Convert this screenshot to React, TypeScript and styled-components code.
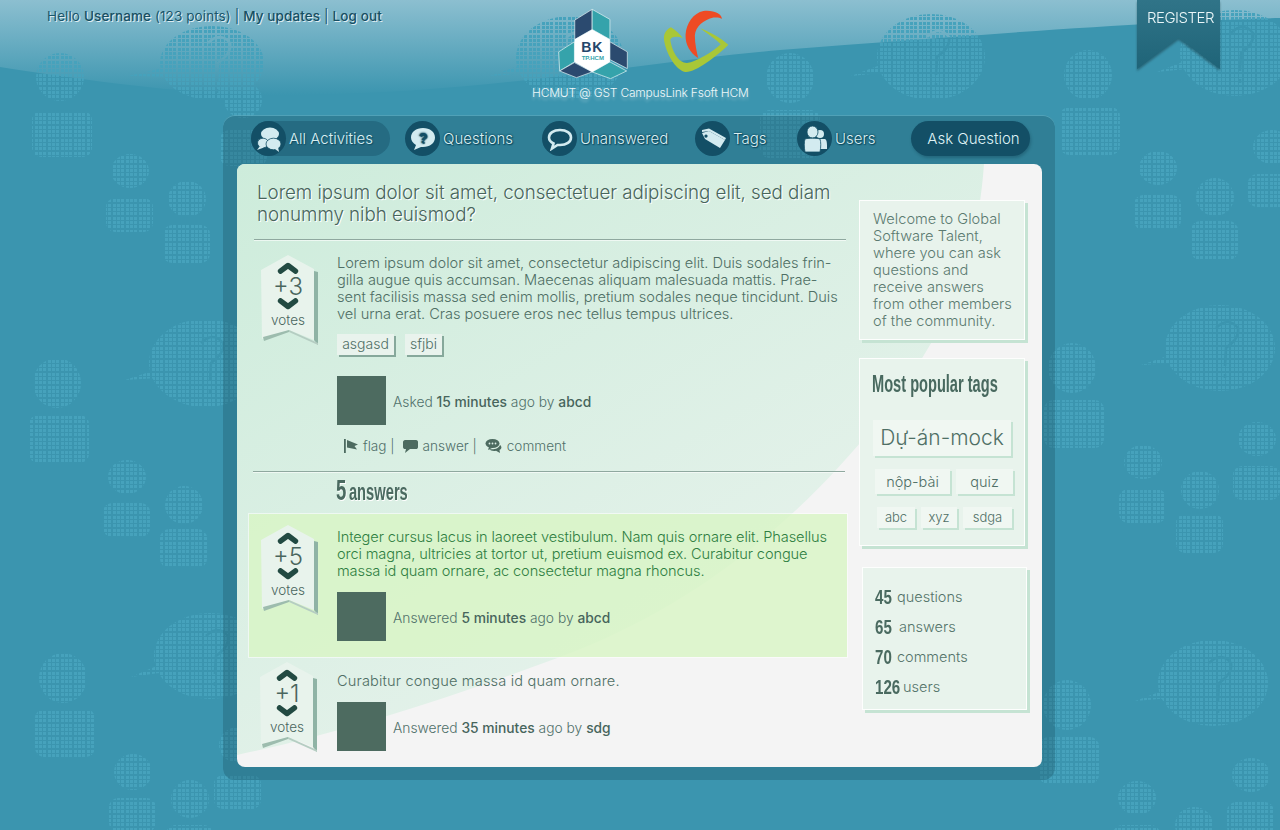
import React from "react";
import styled, { createGlobalStyle } from "styled-components";

const Global = createGlobalStyle`
  html, body { margin: 0; padding: 0; background: #3b95af; }
  body { font-family: Inter, "Noto Sans", "Liberation Sans", sans-serif; font-weight: 300; }
`;

const COND = `"Liberation Sans", Arial, sans-serif`;

const Page = styled.div`
  position: relative;
  width: 1280px;
  height: 830px;
  overflow: hidden;
  background: #3b95af;
`;
const Backdrop = styled.svg`
  position: absolute;
  left: 0;
  top: 0;
`;
const Header = styled.header`
  position: relative;
  display: grid;
  grid-template-columns: 1fr 216px 1fr;
  height: 115px;
`;
const UserLine = styled.div`
  padding: 6px 0 0 47px;
  font-size: 13.5px;
  line-height: 20px;
  letter-spacing: 0.1px;
  color: #1a566b;
  font-weight: 400;
  white-space: nowrap;
  text-shadow: 1px 1px 0 rgba(255, 255, 255, 0.75);
  b { font-weight: 500; color: #174f63; }
`;
const Brand = styled.div`
  display: flex;
  flex-direction: column;
  align-items: stretch;
`;
const LogoRow = styled.div`
  display: flex;
  align-items: flex-start;
  gap: 33px;
  padding: 8px 0 0 25px;
  height: 77px;
`;
const Caption = styled.div`
  font-size: 12px;
  line-height: 16px;
  text-align: center;
  color: #eef8fa;
  white-space: nowrap;
  letter-spacing: -0.2px;
  text-shadow: 0 3px 3px rgba(255, 255, 255, 0.35);
`;
const RibbonSlot = styled.div`
  display: flex;
  justify-content: flex-end;
  padding-right: 60px;
`;
const RibbonShadow = styled.div`
  height: 72px;
  filter: drop-shadow(0 2px 1px rgba(20, 50, 60, 0.45));
`;
const Ribbon = styled.a`
  display: block;
  box-sizing: border-box;
  width: 83px;
  height: 69px;
  padding: 8px 0 0 4px;
  text-align: center;
  font-size: 15px;
  font-weight: 300;
  line-height: 20px;
  letter-spacing: -0.5px;
  color: #eaf6f8;
  background: linear-gradient(#307488, #1f6478);
  clip-path: polygon(0 0, 100% 0, 100% 100%, 50% 55%, 0 100%);
`;

const Panel = styled.main`
  position: relative;
  box-sizing: border-box;
  width: 832px;
  height: 665px;
  margin-left: 223px;
  padding: 6px 13px 13px 14px;
  background: rgba(25, 80, 100, 0.32);
  border-radius: 12px;
  box-shadow: inset 0 1px 0 rgba(120, 205, 225, 0.45);
`;
const Nav = styled.nav`
  display: grid;
  grid-template-columns: 154px 137px 153px 102px 114px 119px;
  height: 35px;
  padding-left: 14px;
  margin-bottom: 8px;
`;
const NavLink = styled.a<{ $pill?: boolean }>`
  display: flex;
  align-items: center;
  gap: 3px;
  height: 35px;
  width: ${(p) => (p.$pill ? "139px" : "auto")};
  border-radius: 18px;
  background: ${(p) => (p.$pill ? "#256b82" : "transparent")};
  font-size: 15px;
  color: #d9eff3;
  font-weight: 300;
  white-space: nowrap;
  text-shadow: ${(p) =>
    p.$pill ? "1px 1px 1px #0f4a5f" : "0 0 2px #0f4a5f, 0 0 2px #0f4a5f, 1px 1px 1px #0f4a5f"};
`;
const NavIcon = styled.span`
  display: flex;
  align-items: center;
  justify-content: center;
  flex: none;
  width: 35px;
  height: 35px;
  border-radius: 50%;
  background: #134f66;
`;
const AskButton = styled.a`
  display: flex;
  align-items: center;
  justify-content: center;
  height: 35px;
  width: 119px;
  box-sizing: border-box;
  padding-left: 6px;
  border-radius: 18px;
  background: #134f66;
  color: #dff2f5;
  font-size: 15px;
  white-space: nowrap;
  box-shadow: 1px 2px 3px rgba(10, 50, 65, 0.3);
`;

const Card = styled.div`
  position: relative;
  display: grid;
  grid-template-columns: 613px 1fr;
  column-gap: 9px;
  height: 603px;
  border-radius: 8px;
  overflow: hidden;
  background: #f4f4f4;
  color: #4a6a60;
`;
const Swoosh = styled.svg`
  position: absolute;
  left: 0;
  top: 0;
`;
const Content = styled.section`
  position: relative;
  padding: 18px 0 0 0;
`;
const Title = styled.h1`
  margin: 0 0 0 20px;
  font-size: 18.8px;
  line-height: 22px;
  font-weight: 300;
  color: #48655c;
  letter-spacing: -0.05px;
  white-space: nowrap;
  text-shadow: 1px 1px 0 #fff;
`;
const Rule = styled.hr<{ $left: number; $top: number }>`
  height: 1px;
  width: 592px;
  border: 0;
  margin: ${(p) => p.$top}px 0 0 ${(p) => p.$left}px;
  background: #8fa89f;
  box-shadow: 0 1px 0 rgba(255, 255, 255, 0.6);
`;
const Post = styled.article<{ $top: number; $badge: number; $col: number }>`
  display: grid;
  grid-template-columns: ${(p) => p.$col}px 1fr;
  padding-left: ${(p) => p.$badge}px;
  padding-top: ${(p) => p.$top}px;
`;
const Body = styled.p<{ $tone?: string; $top?: number; $track?: number }>`
  margin: ${(p) => p.$top ?? 0}px 0 0;
  font-size: 14.6px;
  line-height: 17px;
  letter-spacing: ${(p) => p.$track ?? -0.04}px;
  white-space: nowrap;
  color: ${(p) => p.$tone || "#4f6f65"};
`;
const VoteBox = styled.div`
  position: relative;
  display: flex;
  flex-direction: column;
  align-items: center;
  box-sizing: border-box;
  width: 54px;
  height: 90px;
  padding-top: 7px;
`;
const VoteShape = styled.svg`
  position: absolute;
  left: 0;
  top: 0;
`;
const Chevron = styled.svg`
  position: relative;
  display: block;
`;
const VoteValue = styled.div`
  position: relative;
  padding-top: 1px;
  margin-bottom: -1px;
  font-size: 24px;
  line-height: 24px;
  color: #4a665e;
  font-weight: 300;
`;
const VoteLabel = styled.div`
  position: relative;
  margin-top: 3px;
  font-size: 13.5px;
  line-height: 15px;
  color: #4a665e;
  font-weight: 300;
`;
const TagRow = styled.div`
  display: flex;
  gap: 11px;
  margin-top: 11px;
`;
const PostTag = styled.a<{ $w: number }>`
  display: block;
  box-sizing: border-box;
  width: ${(p) => p.$w}px;
  height: 21px;
  text-align: center;
  font-size: 14px;
  line-height: 20px;
  background: #e9f3ed;
  color: #4f6f65;
  box-shadow: 2px 2px 0 #86a89b;
`;
const Author = styled.div<{ $top: number }>`
  display: flex;
  align-items: center;
  gap: 7px;
  margin-top: ${(p) => p.$top}px;
  font-size: 13.8px;
  color: #50706a;
  b { font-weight: 500; color: #47655c; }
`;
const Avatar = styled.div`
  flex: none;
  width: 49px;
  height: 49px;
  background: #4d6b60;
`;
const AuthorText = styled.span`
  padding-top: 3px;
`;
const Actions = styled.div`
  display: flex;
  align-items: center;
  gap: 5px;
  margin: 10px 0 0 7px;
  height: 22px;
  font-size: 13.6px;
  color: #50706a;
  span { margin-right: 3px; }
`;
const AnswersHead = styled.h2`
  margin: 0 0 0 99px;
  height: 42px;
  font-family: ${COND};
  font-weight: 700;
  font-size: 23px;
  line-height: 36px;
  color: #4a6a60;
  white-space: nowrap;
  transform: scaleX(0.64);
  transform-origin: left center;
  text-shadow: 1px 1px 0 #fff;
  b { font-size: 29px; font-weight: 700; margin-right: 4px; }
`;
const Accepted = styled.div`
  box-sizing: border-box;
  height: 143px;
  width: 598px;
  margin-left: 12px;
  background: rgba(216, 245, 196, 0.8);
  box-shadow: 0 0 0 1px rgba(255, 255, 255, 0.55);
`;
const Aside = styled.aside`
  position: relative;
  display: flex;
  flex-direction: column;
  align-items: flex-start;
  padding-top: 36px;
`;
const Box = styled.div<{ $h: number; $w?: number; $left?: number; $gap: number }>`
  box-sizing: border-box;
  width: ${(p) => p.$w ?? 166}px;
  height: ${(p) => p.$h}px;
  margin: 0 0 ${(p) => p.$gap}px ${(p) => p.$left ?? 0}px;
  background: #e8f3ec;
  border: 1px solid #fdfefd;
  box-shadow: 3px 3px 0 #c5e3d3;
`;
const Welcome = styled.p`
  margin: 0;
  padding: 10px 0 0 13px;
  font-size: 14.6px;
  line-height: 17px;
  white-space: nowrap;
  color: #5b7a70;
`;
const BoxTitle = styled.h3`
  margin: 0 0 0 12px;
  padding: 11px 0 0;
  height: 28px;
  font-family: ${COND};
  font-weight: 700;
  font-size: 23px;
  line-height: 28px;
  white-space: nowrap;
  color: #48695f;
  transform: scaleX(0.635);
  transform-origin: left center;
`;
const CloudRow = styled.div<{ $top: number; $left: number }>`
  display: flex;
  gap: 6px;
  margin: ${(p) => p.$top}px 0 0 ${(p) => p.$left}px;
`;
const CloudTag = styled.a<{ $w: number; $h: number; $size: number }>`
  display: block;
  flex: none;
  box-sizing: border-box;
  width: ${(p) => p.$w}px;
  height: ${(p) => p.$h}px;
  line-height: ${(p) => p.$h}px;
  font-size: ${(p) => p.$size}px;
  text-align: center;
  color: #4f6f65;
  background: #f0f7f2;
  box-shadow: 2px 2px 0 #c5e3d3;
`;
const Stats = styled.div`
  padding: 14px 0 0 12px;
`;
const Stat = styled.div`
  display: flex;
  height: 30px;
  line-height: 30px;
  font-size: 14.5px;
  color: #54736a;
  white-space: nowrap;
`;
const StatNum = styled.b<{ $w: number }>`
  flex: none;
  width: ${(p) => p.$w}px;
  font-family: ${COND};
  font-weight: 700;
  font-size: 21px;
  color: #4a6a60;
  transform: scaleX(0.72);
  transform-origin: left center;
`;

/* ---------- drawings ---------- */
type Person = [number, number, number, number, number, number, number, number];
const people: Person[] = [
  [60, 77, 24, 24, 32, 111, 60, 46],
  [130, 171, 19, 17, 106, 198, 47, 34],
  [187, 199, 19, 18, 163, 225, 47, 38],
  [57, 383, 24, 25, 29, 415, 60, 48],
  [127, 477, 19, 17, 103, 503, 47, 34],
  [184, 505, 19, 19, 160, 529, 47, 39],
  [63, 678, 24, 25, 35, 709, 60, 48],
  [133, 772, 19, 18, 109, 798, 47, 34],
  [190, 799, 19, 19, 166, 825, 47, 34],
  [1088, 75, 24, 25, 1060, 107, 60, 48],
  [1158, 168, 19, 17, 1134, 195, 47, 35],
  [1215, 197, 19, 19, 1191, 221, 47, 39],
  [1272, 147, 19, 17, 1248, 174, 47, 33],
  [1072, 368, 24, 25, 1044, 400, 60, 48],
  [1143, 462, 19, 17, 1119, 489, 47, 34],
  [1200, 490, 19, 19, 1176, 514, 47, 39],
  [1257, 439, 19, 17, 1233, 466, 47, 34],
  [1067, 705, 24, 25, 1039, 737, 60, 47],
  [1137, 798, 19, 17, 1113, 825, 47, 34],
  [1194, 825, 19, 18, 1170, 850, 47, 34],
  [1251, 775, 19, 17, 1227, 802, 47, 34],
  [243, 100, 19, 18, 220, 130, 47, 36],
  [790, 78, 24, 25, 760, 110, 60, 48],
  [238, 745, 19, 18, 214, 775, 47, 34],
];
const bubbles: [number, number, number, number, number, number][] = [
  [212, 63, 52, 37, 128, 76],
  [205, 363, 56, 44, 125, 380],
  [210, 656, 56, 43, 131, 677],
  [570, 58, 54, 42, 490, 76],
  [931, 57, 54, 43, 851, 76],
  [1235, 53, 55, 43, 1157, 72],
  [1220, 348, 55, 43, 1141, 365],
  [1213, 683, 55, 43, 1135, 701],
];
const DOT_STEPS = [0, 4, 9];

const BackdropArt = () => (
  <Backdrop width="1280" height="830" viewBox="0 0 1280 830">
    <defs>
      <linearGradient id="sheen" x1="0" y1="0" x2="0" y2="1">
        <stop offset="0" stopColor="#8cbfd0" />
        <stop offset="1" stopColor="#3b95af" />
      </linearGradient>
      <pattern id="dots" width="13" height="13" patternUnits="userSpaceOnUse">
        {DOT_STEPS.map((x) =>
          DOT_STEPS.map((y) => (
            <rect key={`${x}-${y}`} x={x} y={y} width="3" height="3" fill="#46a2bc" shapeRendering="crispEdges" />
          ))
        )}
      </pattern>
      <mask id="figures" maskUnits="userSpaceOnUse" x="0" y="0" width="1280" height="830">
        {people.map(([hx, hy, rx, ry, bx, by, bw, bh], i) => (
          <g key={i} fill="#fff">
            <ellipse cx={hx} cy={hy} rx={rx} ry={ry} />
            <rect x={bx} y={by} width={bw} height={bh} rx="9" />
          </g>
        ))}
        {bubbles.map(([cx, cy, rx, ry, tx, ty], i) => (
          <g key={i}>
            <ellipse cx={cx} cy={cy} rx={rx} ry={ry} fill="#fff" />
            <path d={`M${tx} ${ty} L${cx - 35} ${cy + 2} L${cx - 30} ${cy + 14} Z`} fill="#fff" />
            <path
              d={`M${cx - 4} ${cy - 20} Q${cx + 8} ${cy - 32} ${cx + 18} ${cy - 20} Q${cx + 20} ${cy - 10} ${cx + 6} ${cy} L${cx + 5} ${cy + 18} M${cx + 5} ${cy + 26} v4`}
              fill="none"
              stroke="#000"
              strokeWidth="2.6"
            />
          </g>
        ))}
      </mask>
    </defs>
    <path
      d="M0 0 H1280 V18 C1180 20 1010 32 780 50 C640 62 500 92 300 95 C200 96 110 84 0 67 Z"
      fill="url(#sheen)"
    />
    <rect width="1280" height="830" fill="url(#dots)" mask="url(#figures)" />
  </Backdrop>
);

const BkLogo = () => (
  <svg width="72" height="72" viewBox="170 24 215 215">
    <g stroke="#e9f6f7" strokeWidth="2" strokeLinejoin="round">
      <polygon points="223,60 275,28 275,88 223,118" fill="#2b4a6f" />
      <polygon points="275,28 328,58 328,118 275,88" fill="#35a3ab" />
      <polygon points="175,155 222,125 222,185 178,212" fill="#35a3ab" />
      <polygon points="178,212 222,187 275,215 228,232" fill="#2b4a6f" />
      <polygon points="328,125 380,155 380,205 328,178" fill="#2b4a6f" />
      <polygon points="275,215 328,185 378,212 330,235" fill="#35a3ab" />
    </g>
    <polygon points="275,88 328,118 328,185 275,215 222,185 222,118" fill="#fff" />
    <text x="275" y="156" textAnchor="middle" fontFamily="Liberation Sans, sans-serif" fontWeight="700" fontSize="42" letterSpacing="2" fill="#24456a">BK</text>
    <text x="277" y="180" textAnchor="middle" fontFamily="Liberation Sans, sans-serif" fontWeight="700" fontSize="18" fill="#35a3ab">TP.HCM</text>
  </svg>
);
const GLogo = () => (
  <svg width="68" height="67" viewBox="485 40 205 200">
    <path d="M512 97 C495 105 488 120 492 140 C498 175 525 225 555 232 C585 235 650 185 685 150 C665 130 630 112 600 100 C620 115 650 135 662 148 C640 170 590 200 560 205 C535 205 515 170 510 135 C512 125 530 122 548 130 C540 118 525 105 512 97 Z" fill="#a9c737" />
    <path d="M665 72 C668 58 640 44 610 48 C580 54 558 85 556 120 C555 150 570 175 594 190 C590 172 584 148 584 122 C586 95 612 74 640 68 C650 67 660 68 665 72 Z" fill="#ee4b24" />
  </svg>
);

const I = "#d3ebf0";
const ActivitiesIcon = () => (
  <svg width="28" height="28" viewBox="0 0 28 28" fill={I}>
    <ellipse cx="15" cy="9" rx="9" ry="6.5" />
    <path d="M9 12 L7 17 L13 14 Z" />
    <ellipse cx="8" cy="18" rx="5.5" ry="4.8" stroke="#134f66" strokeWidth="0.8" />
    <path d="M5 21 L2 25 L9 22.5 Z" />
    <ellipse cx="18.5" cy="19" rx="7.5" ry="5.8" stroke="#134f66" strokeWidth="0.8" />
    <path d="M20 24 L24 27 L23 22 Z" />
  </svg>
);
const QuestionIcon = () => (
  <svg width="26" height="24" viewBox="0 0 26 24">
    <path d="M13 1 C20 1 25 5 25 10.5 C25 16 20 20 13 20 L11 20 L4 23 L6 18 C3 16 1 14 1 10.5 C1 5 6 1 13 1 Z" fill={I} />
    <text x="13" y="16" textAnchor="middle" fontFamily="Liberation Sans, sans-serif" fontWeight="700" fontSize="14" fill="#134f66">?</text>
  </svg>
);
const BubbleIcon = () => (
  <svg width="26" height="24" viewBox="0 0 26 24" fill="none">
    <path d="M13 3 C19.5 3 24 6 24 10.5 C24 15 19.5 18 13 18 L10.5 18 L5 21.5 L6.5 16.5 C3.5 15 2 13 2 10.5 C2 6 6.5 3 13 3 Z" stroke={I} strokeWidth="2.6" />
  </svg>
);
const TagsIcon = () => (
  <svg width="28" height="24" viewBox="0 0 28 24" fill={I}>
    <path d="M10 5 L26 14 L21 22 L6 13 L3 7 Z M7 8.5 a1.6 1.6 0 1 0 0.01 0 Z" fillRule="evenodd" transform="translate(0 -1)" />
    <path d="M3 3 L10 1.5 L27 11 L26 13 L10 4 L3 5 Z" />
  </svg>
);
const UsersIcon = () => (
  <svg width="26" height="28" viewBox="0 0 26 28" fill={I}>
    <circle cx="18" cy="9" r="4" />
    <path d="M15 14 H23 C25 15 25 18 25 24 H16 Z" />
    <ellipse cx="10.5" cy="7" rx="5.5" ry="6" stroke="#134f66" strokeWidth="0.8" />
    <path d="M3 14 C5 13 16 13 18 14 C19 17 19 22 18 27 H3 C2 22 2 17 3 14 Z" stroke="#134f66" strokeWidth="0.8" />
  </svg>
);
const FlagIcon = () => (
  <svg width="14" height="14" viewBox="0 0 14 14" fill="#4d6b60">
    <rect x="0" y="0" width="1.8" height="14" />
    <path d="M3 1 L14 5.5 L10.5 7 L13 10.5 L3 8.5 Z" />
  </svg>
);
const AnswerIcon = () => (
  <svg width="15" height="13" viewBox="0 0 15 13" fill="#4d6b60">
    <path d="M2 0 H13 C14.5 0 15 1 15 2 V7 C15 8.5 14 9 13 9 H7 L2 13 L3 9 H2 C1 9 0 8.5 0 7 V2 C0 1 1 0 2 0 Z" />
  </svg>
);
const CommentIcon = () => (
  <svg width="17" height="14" viewBox="0 0 17 14" fill="#4d6b60">
    <ellipse cx="7.5" cy="4.5" rx="7" ry="4.5" />
    <path d="M4 8 L3 11 L8 8.5 Z" />
    <path d="M4 10 C9 11 14 9.5 15 6 C17 7.5 17 10 14.5 11 L15 14 L11 11.8 C8 12.5 5.5 11.5 4 10 Z" />
    <g fill="#dcefe5"><circle cx="4.5" cy="4.5" r="0.9" /><circle cx="7.5" cy="4.5" r="0.9" /><circle cx="10.5" cy="4.5" r="0.9" /></g>
  </svg>
);

const Chev = ({ up }: { up?: boolean }) => (
  <Chevron width="22" height="12" viewBox="0 0 22 12">
    <path
      d={up ? "M3.5 9.2 L11 3.5 L18.5 9.2" : "M3.5 2.8 L11 8.5 L18.5 2.8"}
      fill="none"
      stroke="#224a42"
      strokeWidth="5.4"
      strokeLinecap="round"
      strokeLinejoin="round"
    />
  </Chevron>
);

const Vote = ({ value }: { value: string }) => (
  <VoteBox>
    <VoteShape width="57" height="90" viewBox="0 0 57 90">
      <polygon points="27,0 53,14 53,85 28,75 1,84 0,15" fill="#e8f3ec" />
      <polygon points="53,16 57,17 57,90 53,85" fill="#8fb3a5" />
      <polygon points="2,82 28,75 28,77 3,86" fill="#9dbcae" />
      <polygon points="28,75 57,88 57,90 28,77" fill="#b5cdc2" />
    </VoteShape>
    <Chev up />
    <VoteValue>{value}</VoteValue>
    <Chev />
    <VoteLabel>votes</VoteLabel>
  </VoteBox>
);

export default function App() {
  return (
    <Page>
      <Global />
      <BackdropArt />
      <Header>
        <UserLine>
          Hello <b>Username</b> (123 points) | <b>My updates</b> | <b>Log out</b>
        </UserLine>
        <Brand>
          <LogoRow>
            <BkLogo />
            <GLogo />
          </LogoRow>
          <Caption>HCMUT @ GST CampusLink Fsoft HCM</Caption>
        </Brand>
        <RibbonSlot>
          <RibbonShadow>
            <Ribbon>REGISTER</Ribbon>
          </RibbonShadow>
        </RibbonSlot>
      </Header>
      <Panel>
        <Nav>
          <NavLink $pill><NavIcon><ActivitiesIcon /></NavIcon>All Activities</NavLink>
          <NavLink><NavIcon><QuestionIcon /></NavIcon>Questions</NavLink>
          <NavLink><NavIcon><BubbleIcon /></NavIcon>Unanswered</NavLink>
          <NavLink><NavIcon><TagsIcon /></NavIcon>Tags</NavLink>
          <NavLink><NavIcon><UsersIcon /></NavIcon>Users</NavLink>
          <AskButton>Ask Question</AskButton>
        </Nav>
        <Card>
          <Swoosh width="805" height="603" viewBox="0 0 805 603">
            <defs>
              <linearGradient id="mint" x1="0" y1="0" x2="0.75" y2="1">
                <stop offset="0" stopColor="#cdecdb" />
                <stop offset="1" stopColor="#eaf3ee" />
              </linearGradient>
            </defs>
            <path d="M0 0 L747 0 C742 70 725 130 690 186 C640 270 520 420 323 493 C210 535 100 570 0 591 Z" fill="url(#mint)" />
          </Swoosh>
          <Content>
            <Title>
              Lorem ipsum dolor sit amet, consectetuer adipiscing elit, sed diam<br />
              nonummy nibh euismod?
            </Title>
            <Rule $left={17} $top={13} />
            <Post $top={15} $badge={24} $col={76}>
              <Vote value="+3" />
              <div>
                <Body>
                  Lorem ipsum dolor sit amet, consectetur adipiscing elit. Duis sodales frin-<br />
                  gilla augue quis accumsan. Maecenas aliquam malesuada mattis. Prae-<br />
                  sent facilisis massa sed enim mollis, pretium sodales neque tincidunt. Duis<br />
                  vel urna erat. Cras posuere eros nec tellus tempus ultrices.
                </Body>
                <TagRow>
                  <PostTag $w={57}>asgasd</PostTag>
                  <PostTag $w={37}>sfjbi</PostTag>
                </TagRow>
                <Author $top={21}>
                  <Avatar />
                  <AuthorText>Asked <b>15 minutes</b> ago by <b>abcd</b></AuthorText>
                </Author>
                <Actions>
                  <FlagIcon /><span>flag |</span>
                  <AnswerIcon /><span>answer |</span>
                  <CommentIcon /><span>comment</span>
                </Actions>
              </div>
            </Post>
            <Rule $left={16} $top={14} />
            <AnswersHead><b>5</b>answers</AnswersHead>
            <Accepted>
              <Post $top={11} $badge={12} $col={76}>
                <Vote value="+5" />
                <div>
                  <Body $tone="#2f7f42" $top={4} $track={-0.12}>
                    Integer cursus lacus in laoreet vestibulum. Nam quis ornare elit. Phasellus<br />
                    orci magna, ultricies at tortor ut, pretium euismod ex. Curabitur congue<br />
                    massa id quam ornare, ac consectetur magna rhoncus.
                  </Body>
                  <Author $top={12}>
                    <Avatar />
                    <AuthorText>Answered <b>5 minutes</b> ago by <b>abcd</b></AuthorText>
                  </Author>
                </div>
              </Post>
            </Accepted>
            <Post $top={5} $badge={23} $col={77}>
              <Vote value="+1" />
              <div>
                <Body $top={11} $track={0.15}>Curabitur congue massa id quam ornare.</Body>
                <Author $top={12}>
                  <Avatar />
                  <AuthorText>Answered <b>35 minutes</b> ago by <b>sdg</b></AuthorText>
                </Author>
              </div>
            </Post>
          </Content>
          <Aside>
            <Box $h={140} $gap={18}>
              <Welcome>
                Welcome to Global<br />
                Software Talent,<br />
                where you can ask<br />
                questions and<br />
                receive answers<br />
                from other members<br />
                of the community.
              </Welcome>
            </Box>
            <Box $h={188} $gap={21}>
              <BoxTitle>Most popular tags</BoxTitle>
              <CloudRow $top={22} $left={13}>
                <CloudTag $w={138} $h={36} $size={21}>Dự-án-mock</CloudTag>
              </CloudRow>
              <CloudRow $top={13} $left={15}>
                <CloudTag $w={75} $h={25} $size={14.5}>nộp-bài</CloudTag>
                <CloudTag $w={57} $h={25} $size={14.5}>quiz</CloudTag>
              </CloudRow>
              <CloudRow $top={13} $left={17}>
                <CloudTag $w={38} $h={21} $size={13}>abc</CloudTag>
                <CloudTag $w={36} $h={21} $size={13}>xyz</CloudTag>
                <CloudTag $w={49} $h={21} $size={13}>sdga</CloudTag>
              </CloudRow>
            </Box>
            <Box $h={143} $w={165} $left={3} $gap={0}>
              <Stats>
                <Stat><StatNum $w={22}>45</StatNum>questions</Stat>
                <Stat><StatNum $w={24}>65</StatNum>answers</Stat>
                <Stat><StatNum $w={22}>70</StatNum>comments</Stat>
                <Stat><StatNum $w={28}>126</StatNum>users</Stat>
              </Stats>
            </Box>
          </Aside>
        </Card>
      </Panel>
    </Page>
  );
}
